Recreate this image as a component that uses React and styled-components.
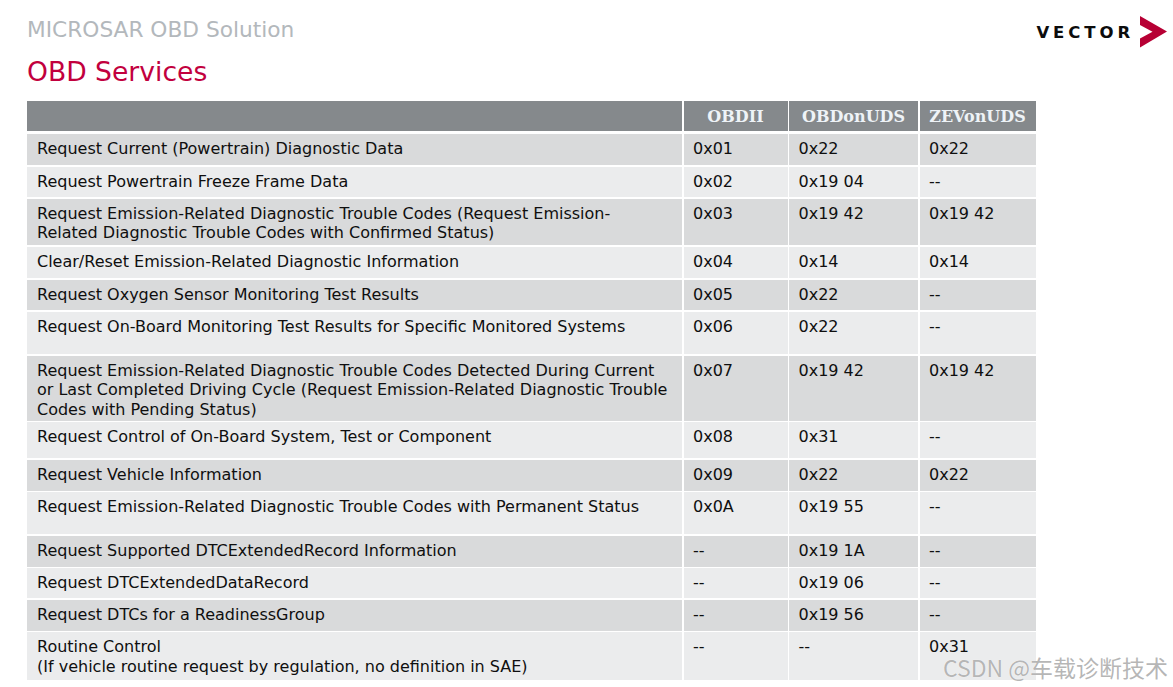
import React from 'react';
import styled, { createGlobalStyle } from 'styled-components';

const GlobalStyle = createGlobalStyle`
  html, body {
    margin: 0;
    padding: 0;
    background: #fff;
  }
  body {
    font-family: "DejaVu Sans", Verdana, sans-serif;
  }
`;

const Page = styled.div`
  position: relative;
  width: 1173px;
  height: 687px;
  overflow: hidden;
  box-sizing: border-box;
  padding: 0 6px 0 27px;
`;

const TopBar = styled.div`
  display: flex;
  justify-content: space-between;
  align-items: flex-start;
`;

const Titles = styled.div`
  display: flex;
  flex-direction: column;
`;

const Subtitle = styled.div`
  padding-top: 17px;
  font-size: 21.7px;
  line-height: 26px;
  color: #b3b8bc;
`;

const Title = styled.h1`
  margin: 13px 0 0;
  font-size: 26.6px;
  line-height: 32px;
  font-weight: normal;
  color: #c2003e;
`;

const Logo = styled.div`
  display: flex;
  align-items: center;
  gap: 6px;
  margin-top: 16px;
`;

const LogoText = styled.span`
  font-family: "DejaVu Sans", sans-serif;
  font-weight: bold;
  font-size: 16.5px;
  letter-spacing: 3.9px;
  color: #0c0c0c;
`;

const Table = styled.div`
  display: flex;
  flex-direction: column;
  gap: 1.5px;
  width: 1008.5px;
  margin-top: 13px;
`;

const Row = styled.div`
  display: grid;
  grid-template-columns: 655px 104px 129px 116px;
  column-gap: 1.5px;
  height: ${(p) => p.h}px;
`;

const HeadRow = styled(Row)`
  margin-bottom: 1.5px;
`;

const HeadCell = styled.div`
  background: #85898c;
  display: flex;
  align-items: center;
  justify-content: center;
  font-family: "DejaVu Serif", serif;
  font-weight: bold;
  font-size: 16px;
  color: #eef3f7;
`;

const Cell = styled.div`
  background: ${(p) => (p.odd ? '#d9dadb' : '#ebeced')};
  box-sizing: border-box;
  padding: 5px 10px 0 ${(p) => (p.first ? 10 : 9.5)}px;
  font-size: 16px;
  line-height: 19.5px;
  color: #0f0f0f;
  white-space: nowrap;
`;

const Watermark = styled.div`
  position: absolute;
  right: 5px;
  bottom: 7px;
  font-family: "Noto Sans CJK SC", "DejaVu Sans", sans-serif;
  font-size: 23px;
  line-height: 26px;
  color: rgba(150, 150, 150, 0.7);
  text-shadow: 0 0 1px #fff;
`;

const rows = [
  { h: 31, name: ['Request Current (Powertrain) Diagnostic Data'], obd: '0x01', uds: '0x22', zev: '0x22' },
  { h: 30.5, name: ['Request Powertrain Freeze Frame Data'], obd: '0x02', uds: '0x19 04', zev: '--' },
  {
    h: 46.5,
    name: [
      'Request Emission-Related Diagnostic Trouble Codes (Request Emission-',
      'Related Diagnostic Trouble Codes with Confirmed Status)',
    ],
    obd: '0x03',
    uds: '0x19 42',
    zev: '0x19 42',
  },
  { h: 31.5, name: ['Clear/Reset Emission-Related Diagnostic Information'], obd: '0x04', uds: '0x14', zev: '0x14' },
  { h: 30.5, name: ['Request Oxygen Sensor Monitoring Test Results'], obd: '0x05', uds: '0x22', zev: '--' },
  { h: 42.5, name: ['Request On-Board Monitoring Test Results for Specific Monitored Systems'], obd: '0x06', uds: '0x22', zev: '--' },
  {
    h: 65,
    name: [
      'Request Emission-Related Diagnostic Trouble Codes Detected During Current',
      'or Last Completed Driving Cycle (Request Emission-Related Diagnostic Trouble',
      'Codes with Pending Status)',
    ],
    obd: '0x07',
    uds: '0x19 42',
    zev: '0x19 42',
  },
  { h: 36, name: ['Request Control of On-Board System, Test or Component'], obd: '0x08', uds: '0x31', zev: '--' },
  { h: 31, name: ['Request Vehicle Information'], obd: '0x09', uds: '0x22', zev: '0x22' },
  { h: 42, name: ['Request Emission-Related Diagnostic Trouble Codes with Permanent Status'], obd: '0x0A', uds: '0x19 55', zev: '--' },
  { h: 31, name: ['Request Supported DTCExtendedRecord Information'], obd: '--', uds: '0x19 1A', zev: '--' },
  { h: 30, name: ['Request DTCExtendedDataRecord'], obd: '--', uds: '0x19 06', zev: '--' },
  { h: 31, name: ['Request DTCs for a ReadinessGroup'], obd: '--', uds: '0x19 56', zev: '--' },
  {
    h: 48,
    name: ['Routine Control', '(If vehicle routine request by regulation, no definition in SAE)'],
    obd: '--',
    uds: '--',
    zev: '0x31',
  },
];

const VectorMark = () => (
  <svg width="27" height="32" viewBox="0 0 27 32">
    <polygon points="0,0 27,15.5 0,31.5 0,22.5 12.5,15.7 0,9" fill="#b70034" />
  </svg>
);

const App = () => {
  return (
    <Page>
      <GlobalStyle />
      <TopBar>
        <Titles>
          <Subtitle>MICROSAR OBD Solution</Subtitle>
          <Title>OBD Services</Title>
        </Titles>
        <Logo>
          <LogoText>VECTOR</LogoText>
          <VectorMark />
        </Logo>
      </TopBar>

      <Table>
        <HeadRow h={30}>
          <HeadCell />
          <HeadCell>OBDII</HeadCell>
          <HeadCell>OBDonUDS</HeadCell>
          <HeadCell>ZEVonUDS</HeadCell>
        </HeadRow>
        {rows.map((r, i) => {
          const odd = i % 2 === 0;
          return (
            <Row key={i} h={r.h}>
              <Cell odd={odd} first>
                {r.name.map((line, j) => (
                  <div key={j}>{line}</div>
                ))}
              </Cell>
              <Cell odd={odd}>{r.obd}</Cell>
              <Cell odd={odd}>{r.uds}</Cell>
              <Cell odd={odd}>{r.zev}</Cell>
            </Row>
          );
        })}
      </Table>

      <Watermark>CSDN @车载诊断技术</Watermark>
    </Page>
  );
};

export default App;
